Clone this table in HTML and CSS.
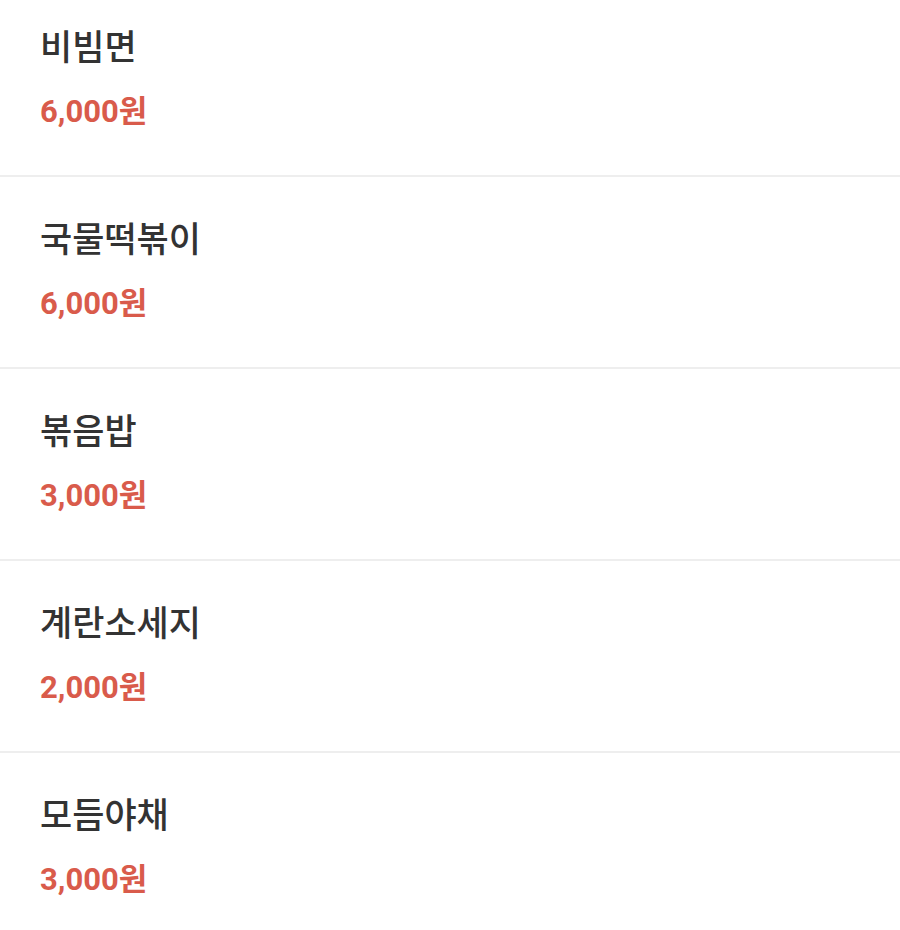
FILE: index.html
```html
<!DOCTYPE html>
<html lang="ko">
<head>
<meta charset="utf-8">
<link rel="stylesheet" href="styles.css">
</head>
<body>
<ul class="menu">
  <li class="item"><div class="name">비빔면</div><div class="price">6,000원</div></li>
  <li class="item"><div class="name">국물떡볶이</div><div class="price">6,000원</div></li>
  <li class="item"><div class="name">볶음밥</div><div class="price">3,000원</div></li>
  <li class="item"><div class="name">계란소세지</div><div class="price">2,000원</div></li>
  <li class="item"><div class="name">모듬야채</div><div class="price">3,000원</div></li>
</ul>
</body>
</html>
```
FILE: styles.css
```css
html, body {
  margin: 0;
  padding: 0;
  background: #ffffff;
}
.menu {
  list-style: none;
  margin: -15px 0 0 0;
  padding: 0;
}
.item {
  display: flex;
  flex-direction: column;
  gap: 19px;
  padding: 36px 40px 39px 40px;
  border-bottom: 2px solid #eeeeee;
}
.name {
  font-family: "Noto Sans CJK KR", "Noto Sans", sans-serif;
  font-weight: 500;
  font-size: 35px;
  line-height: 48px;
  color: #333333;
}
.price {
  font-family: Roboto, "Noto Sans CJK KR", sans-serif;
  font-weight: 700;
  font-size: 31px;
  line-height: 48px;
  color: #d95b4b;
}
```
